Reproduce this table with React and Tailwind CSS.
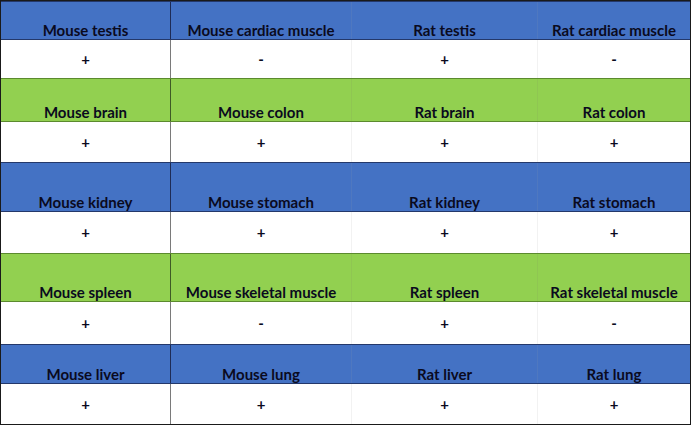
import React from "react";

const rows = [
    { color: "blue", h: "h-[39px]", names: ["Mouse testis", "Mouse cardiac muscle", "Rat testis", "Rat cardiac muscle"], vh: "h-[38px]", vals: ["+", "-", "+", "-"] },
    { color: "green", h: "h-[44px]", names: ["Mouse brain", "Mouse colon", "Rat brain", "Rat colon"], vh: "h-[40px]", vals: ["+", "+", "+", "+"] },
    { color: "blue", h: "h-[50px]", names: ["Mouse kidney", "Mouse stomach", "Rat kidney", "Rat stomach"], vh: "h-[41px]", vals: ["+", "+", "+", "+"] },
    { color: "green", h: "h-[49px]", names: ["Mouse spleen", "Mouse skeletal muscle", "Rat spleen", "Rat skeletal muscle"], vh: "h-[42px]", vals: ["+", "-", "+", "-"] },
    { color: "blue", h: "h-[40px]", names: ["Mouse liver", "Mouse lung", "Rat liver", "Rat lung"], vh: "h-[40px]", vals: ["+", "+", "+", "+"] },
];

const cols = "grid grid-cols-[170px_181px_186px_152px]";

function HeaderRow({ row }) {
    const blue = row.color === "blue";
    return (
        <div
            className={`${cols} ${row.h} ${
                blue ? "bg-[#4472c4] border-y border-[#24386a]" : "bg-[#92d050] border-y border-[#5b8a2e]"
            }`}
        >
            {row.names.map((n, i) => (
                <div
                    key={n}
                    className={`flex items-end justify-center pb-[1px] ${
                        i === 0
                            ? blue
                                ? "border-r border-[#1e2b55]"
                                : "border-r border-[#3f5a26]"
                            : i < 3
                            ? blue
                                ? "border-r border-[#4f78c0]"
                                : "border-r border-[#8fc652]"
                            : ""
                    }`}
                >
                    {n}
                </div>
            ))}
        </div>
    );
}

function ValueRow({ row }) {
    return (
        <div className={`${cols} ${row.vh} bg-white`}>
            {row.vals.map((v, i) => (
                <div
                    key={i}
                    className={`flex items-center justify-center text-[15px] ${
                        i === 0 ? "border-r border-[#7a7a7a]" : i < 3 ? "border-r border-[#f2f2f2]" : ""
                    }`}
                >
                    {v}
                </div>
            ))}
        </div>
    );
}

export default function App() {
    return (
        <div
            className="w-[691px] h-[425px] bg-white overflow-hidden text-[#0a0a1e] font-bold text-[15px] leading-none"
            style={{ fontFamily: "Lato, 'Open Sans', sans-serif" }}
        >
            <div className="w-[691px] border border-[#1a1a1a]">
                {rows.map((r, i) => (
                    <React.Fragment key={i}>
                        <HeaderRow row={r} />
                        <ValueRow row={r} />
                    </React.Fragment>
                ))}
            </div>
        </div>
    );
}
